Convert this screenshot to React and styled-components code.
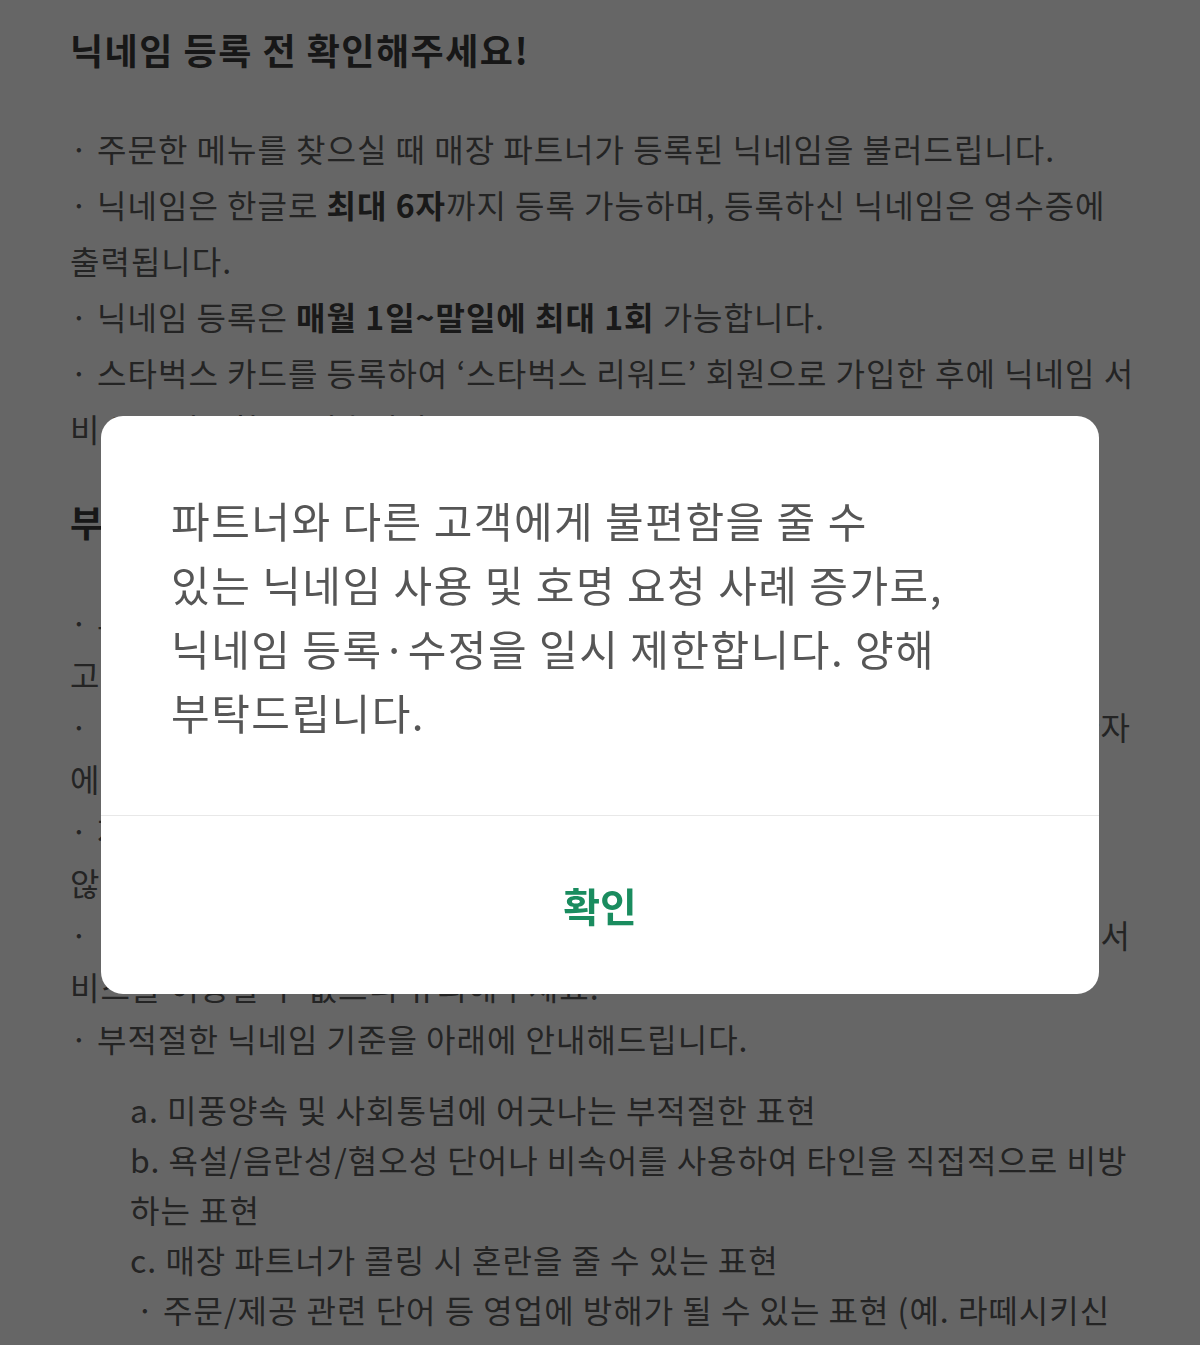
import React from "react";
import styled, { createGlobalStyle } from "styled-components";

const GlobalStyle = createGlobalStyle`
  html, body {
    margin: 0;
    padding: 0;
    overflow: hidden;
    background: #ffffff;
  }
  body {
    font-family: "Noto Sans CJK KR", "Noto Sans", sans-serif;
  }
`;

export default function App() {
  return (
    <>
      <GlobalStyle />
      <Page>
        <Title>닉네임 등록 전 확인해주세요!</Title>
        <Notes>
          <P>· 주문한 메뉴를 찾으실 때 매장 파트너가 등록된 닉네임을 불러드립니다.</P>
          <P>
            · 닉네임은 한글로 <B>최대 6자</B>까지 등록 가능하며, 등록하신 닉네임은 영수증에
            <br />
            출력됩니다.
          </P>
          <P>
            · 닉네임 등록은 <B>매월 1일~말일에 최대 1회</B> 가능합니다.
          </P>
          <P>
            · 스타벅스 카드를 등록하여 ‘스타벅스 리워드’ 회원으로 가입한 후에 닉네임 서
            <br />
            비스를 이용할 수 있습니다.
          </P>
        </Notes>

        <Title top={42} bottom={52}>부적절한 닉네임 사용 제한 안내</Title>
        <Notes lh={52}>
          <P>
            · 부적절한 닉네임으로 판단되는 경우 사전 안내 없이 사용이 제한되며,
            <br />
            고객님께 별도로 안내해드립니다.
          </P>
          <P>
            <Stretch>· 사용이 제한된 닉네임은 주문 시 호명되지 않으며 이름의 첫 글자</Stretch>
            에 해당하는 기본 닉네임으로 변경됩니다.
          </P>
          <P>
            · 제한된 닉네임은 다시 등록할 수 없으며, 제한 사유는 별도로 공개하지
            <br />
            않습니다.
          </P>
          <P>
            <Stretch>· 부적절한 닉네임을 반복하여 등록하는 경우 일정 기간 닉네임 서</Stretch>
            비스를 이용할 수 없으니 유의해주세요.
          </P>
          <P>· 부적절한 닉네임 기준을 아래에 안내해드립니다.</P>
        </Notes>

        <SubList>
          <P>a. 미풍양속 및 사회통념에 어긋나는 부적절한 표현</P>
          <P>
            b. 욕설/음란성/혐오성 단어나 비속어를 사용하여 타인을 직접적으로 비방
            <br />
            하는 표현
          </P>
          <P>c. 매장 파트너가 콜링 시 혼란을 줄 수 있는 표현</P>
          <P indent={6}>
            · 주문/제공 관련 단어 등 영업에 방해가 될 수 있는 표현 (예. 라떼시키신
            <br />
            분, 아이스주문하신분 등)
          </P>
        </SubList>
      </Page>

      <Overlay>
        <Dialog>
          <Message>
            파트너와 다른 고객에게 불편함을 줄 수
            <br />
            있는 닉네임 사용 및 호명 요청 사례 증가로,
            <br />
            닉네임 등록·수정을 일시 제한합니다. 양해
            <br />
            부탁드립니다.
          </Message>
          <ConfirmButton type="button">확인</ConfirmButton>
        </Dialog>
      </Overlay>
    </>
  );
}

const Page = styled.div`
  width: 100%;
  box-sizing: border-box;
  padding: 26px 70px 0;
  color: #5a5a5a;
`;

const Title = styled.h2`
  margin: ${(p) => p.top || 0}px 0 ${(p) => p.bottom || 48}px;
  font-size: 36px;
  line-height: 46px;
  font-weight: 700;
  color: #3a3a3a;
  letter-spacing: 1.5px;
`;

const Notes = styled.div`
  display: flex;
  flex-direction: column;
  font-size: 32px;
  line-height: ${(p) => p.lh || 56}px;
  letter-spacing: 1px;
`;

const P = styled.p`
  margin: 0;
  padding-left: ${(p) => p.indent || 0}px;
  white-space: nowrap;
`;

const B = styled.b`
  font-weight: 700;
  color: #404040;
`;

const Stretch = styled.span`
  display: block;
  text-align: justify;
  text-align-last: justify;
  letter-spacing: 0;
`;

const SubList = styled.div`
  display: flex;
  flex-direction: column;
  margin-top: 20px;
  padding-left: 60px;
  font-size: 32px;
  line-height: 50px;
  letter-spacing: 1px;
`;

const Overlay = styled.div`
  position: fixed;
  inset: 0;
  background: rgba(0, 0, 0, 0.6);
  display: flex;
  flex-direction: column;
  align-items: center;
  padding-top: 416px;
  box-sizing: border-box;
`;

const Dialog = styled.div`
  width: 998px;
  background: #ffffff;
  border-radius: 22px;
  display: flex;
  flex-direction: column;
  overflow: hidden;
`;

const Message = styled.p`
  margin: 0;
  padding: 72px 70px 71px;
  font-size: 42px;
  line-height: 64px;
  font-weight: 400;
  letter-spacing: 1.5px;
  color: #565656;
  white-space: nowrap;
  border-bottom: 1px solid #e8e8e8;
`;

const ConfirmButton = styled.button`
  height: 178px;
  border: none;
  background: transparent;
  font-family: inherit;
  font-size: 40px;
  font-weight: 700;
  color: #1a8c5f;
  padding: 0;
  cursor: pointer;
`;
